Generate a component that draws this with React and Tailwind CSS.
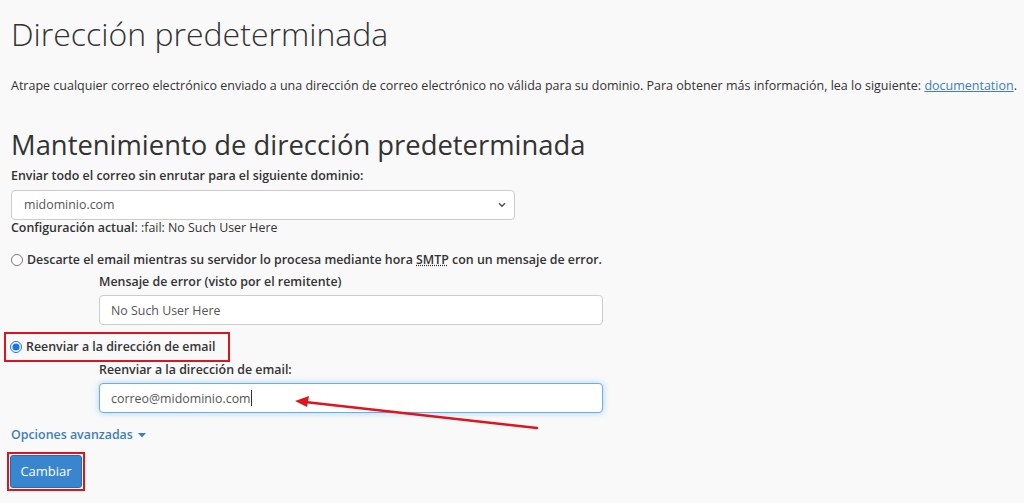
import { useState } from 'react'

function RedArrow() {
  return (
    <svg className="pointer-events-none absolute left-0 top-0" width="1024" height="503">
      <line x1="537" y1="428" x2="305" y2="402" stroke="#e0141e" strokeWidth="2.5" strokeLinecap="round" />
      <polygon points="295,401 309,396 307,407" fill="#e0141e" />
    </svg>
  )
}

export default function App() {
  const [mode, setMode] = useState('forward')
  const [email, setEmail] = useState('correo@midominio.com')

  return (
    <div className="relative h-[503px] w-[1024px] overflow-hidden bg-[#f9f9f9] text-[#333] font-['Open_Sans',sans-serif] text-[12.4px]">
      <div className="px-[11px] pt-[12px]">
        <h1 className="text-[32px] font-light leading-[44px] text-[#333]">Dirección predeterminada</h1>

        <p className="mt-[21px] whitespace-nowrap text-[12.5px] leading-[18px]">
          Atrape cualquier correo electrónico enviado a una dirección de correo electrónico no válida para su dominio. Para obtener más información, lea lo siguiente:{' '}
          <a href="#" className="text-[#3f7fb8] underline">documentation</a>.
        </p>

        <h2 className="mt-[33px] text-[27.4px] leading-[34px] text-[#333]">Mantenimiento de dirección predeterminada</h2>

        <label className="mt-[5px] block font-semibold leading-[18px]">Enviar todo el correo sin enrutar para el siguiente dominio:</label>
        <div className="relative mt-[5px] w-[504px]">
          <select className="h-[30px] w-full appearance-none rounded-[4px] border border-[#ccc] bg-white px-[12px] text-[#555]">
            <option>midominio.com</option>
          </select>
          <svg className="pointer-events-none absolute right-[9px] top-[12px]" width="8" height="6" viewBox="0 0 8 6">
            <path d="M1 1.2l3 3 3-3" fill="none" stroke="#555" strokeWidth="1.6" />
          </svg>
        </div>
        <div className="leading-[16px]">
          <span className="font-semibold">Configuración actual</span>: :fail: No Such User Here
        </div>

        <label className="mt-[15px] flex items-center gap-[4px] leading-[18px]">
          <input
            type="radio"
            name="mode"
            checked={mode === 'fail'}
            onChange={() => setMode('fail')}
            className="m-0 h-[12px] w-[12px]"
          />
          <span className="font-semibold">
            Descarte el email mientras su servidor lo procesa mediante hora{' '}
            <abbr className="underline decoration-dotted">SMTP</abbr> con un mensaje de error.
          </span>
        </label>
        <div className="ml-[88px] mt-[4px]">
          <label className="block font-semibold leading-[18px]">Mensaje de error (visto por el remitente)</label>
          <input
            type="text"
            defaultValue="No Such User Here"
            className="mt-[4px] h-[30px] w-[504px] rounded-[4px] border border-[#ccc] bg-white px-[11px] text-[#555] outline-none"
          />
        </div>

        <div className="mt-[7px] -ml-[7px] flex h-[30px] w-[226px] items-center border-[2px] border-[#d9161f] pl-[4px]">
          <label className="flex items-center gap-[4px] leading-[18px]">
            <input
              type="radio"
              name="mode"
              checked={mode === 'forward'}
              onChange={() => setMode('forward')}
              className="m-0 h-[12px] w-[12px] accent-[#1a73e8]"
            />
            <span className="font-semibold">Reenviar a la dirección de email</span>
          </label>
        </div>
        <div className="ml-[88px]">
          <label className="block font-semibold leading-[16px]">Reenviar a la dirección de email:</label>
          <div className="relative mt-[5px] w-[504px]">
            <input
              type="text"
              value={email}
              onChange={(e) => setEmail(e.target.value)}
              className="h-[30px] w-full rounded-[4px] border border-[#66afe9] bg-white px-[11px] text-[#555] shadow-[0_0_6px_rgba(102,175,233,0.5)] outline-none"
            />
            {/* text caret of the focused field */}
            <span className="pointer-events-none absolute left-[152px] top-[7px] h-[16px] w-px bg-[#333]" />
          </div>
        </div>

        <button type="button" className="mt-[13px] flex items-center gap-[5px] font-semibold leading-[18px] text-[#3f7fb8]">
          Opciones avanzadas
          <svg width="8" height="5" viewBox="0 0 8 5">
            <path d="M0 0h8L4 4.5z" fill="#3f7fb8" />
          </svg>
        </button>

        <div className="mt-[8px] -ml-[4px] w-fit border-[2px] border-[#d9161f] p-[1px]">
          <button type="button" className="block h-[33px] w-[72px] rounded-[3px] border border-[#2d6ca2] bg-[#3986cf] text-[13px] text-white">
            Cambiar
          </button>
        </div>
      </div>
      <RedArrow />
    </div>
  )
}
